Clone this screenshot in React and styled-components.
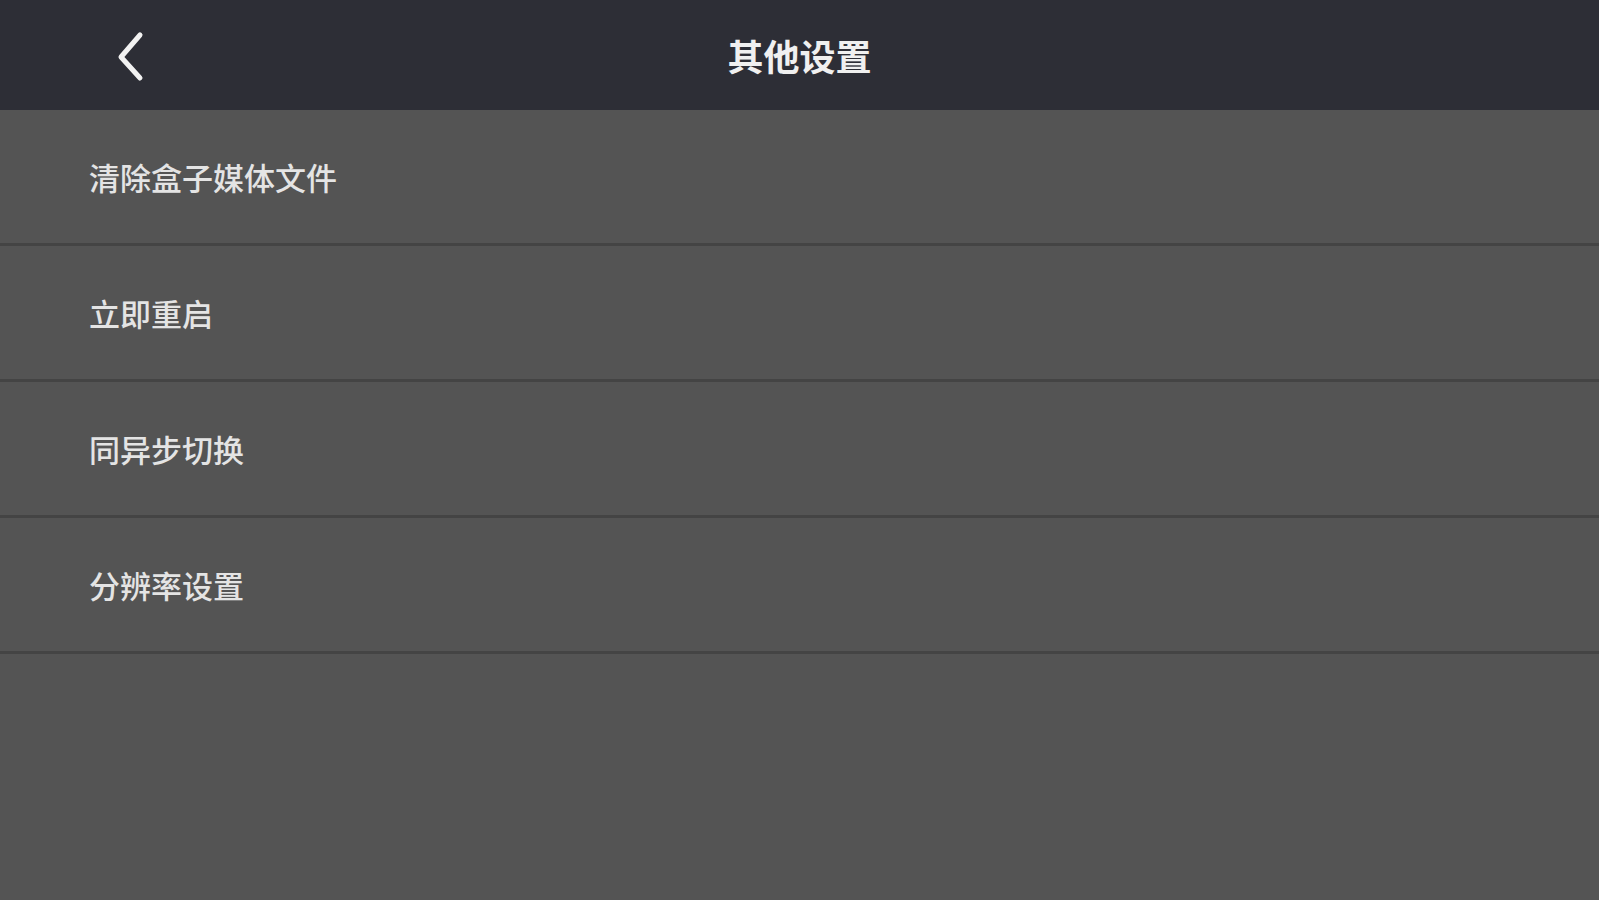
import React from 'react';
import styled, { createGlobalStyle } from 'styled-components';

const GlobalStyle = createGlobalStyle`
  html, body {
    margin: 0;
    padding: 0;
    background: #545454;
  }
  body {
    font-family: "Noto Sans CJK SC", "Noto Sans", sans-serif;
  }
`;

const items = ['清除盒子媒体文件', '立即重启', '同异步切换', '分辨率设置'];

function App() {
  return (
    <>
      <GlobalStyle />
      <Page>
        <Header>
          <BackButton aria-label="返回">
            <svg width="30" height="52" viewBox="0 0 30 52" fill="none">
              <path
                d="M25 5 L6 27 L25 48"
                stroke="#f2f2f2"
                strokeWidth="5"
                strokeLinecap="round"
                strokeLinejoin="round"
              />
            </svg>
          </BackButton>
          <Title>其他设置</Title>
        </Header>
        <List>
          {items.map((label) => (
            <Row key={label}>
              <Label>{label}</Label>
            </Row>
          ))}
        </List>
      </Page>
    </>
  );
}

const Page = styled.div`
  width: 100%;
  min-height: 900px;
  background: #545454;
`;

const Header = styled.header`
  position: relative;
  height: 110px;
  background: #2d2e36;
  display: flex;
  align-items: center;
  justify-content: center;
`;

const BackButton = styled.button`
  position: absolute;
  left: 115px;
  top: 30px;
  padding: 0;
  border: none;
  background: transparent;
  display: flex;
  cursor: pointer;
`;

const Title = styled.h1`
  margin: 0;
  font-size: 36px;
  font-weight: 700;
  color: #f0f0f0;
`;

const List = styled.div`
  display: flex;
  flex-direction: column;
`;

const Row = styled.div`
  height: 133px;
  border-bottom: 3px solid #444444;
  display: flex;
  align-items: center;
  padding-left: 89px;
`;

const Label = styled.span`
  font-size: 31px;
  font-weight: 500;
  color: #e4e4e4;
`;

export default App;
